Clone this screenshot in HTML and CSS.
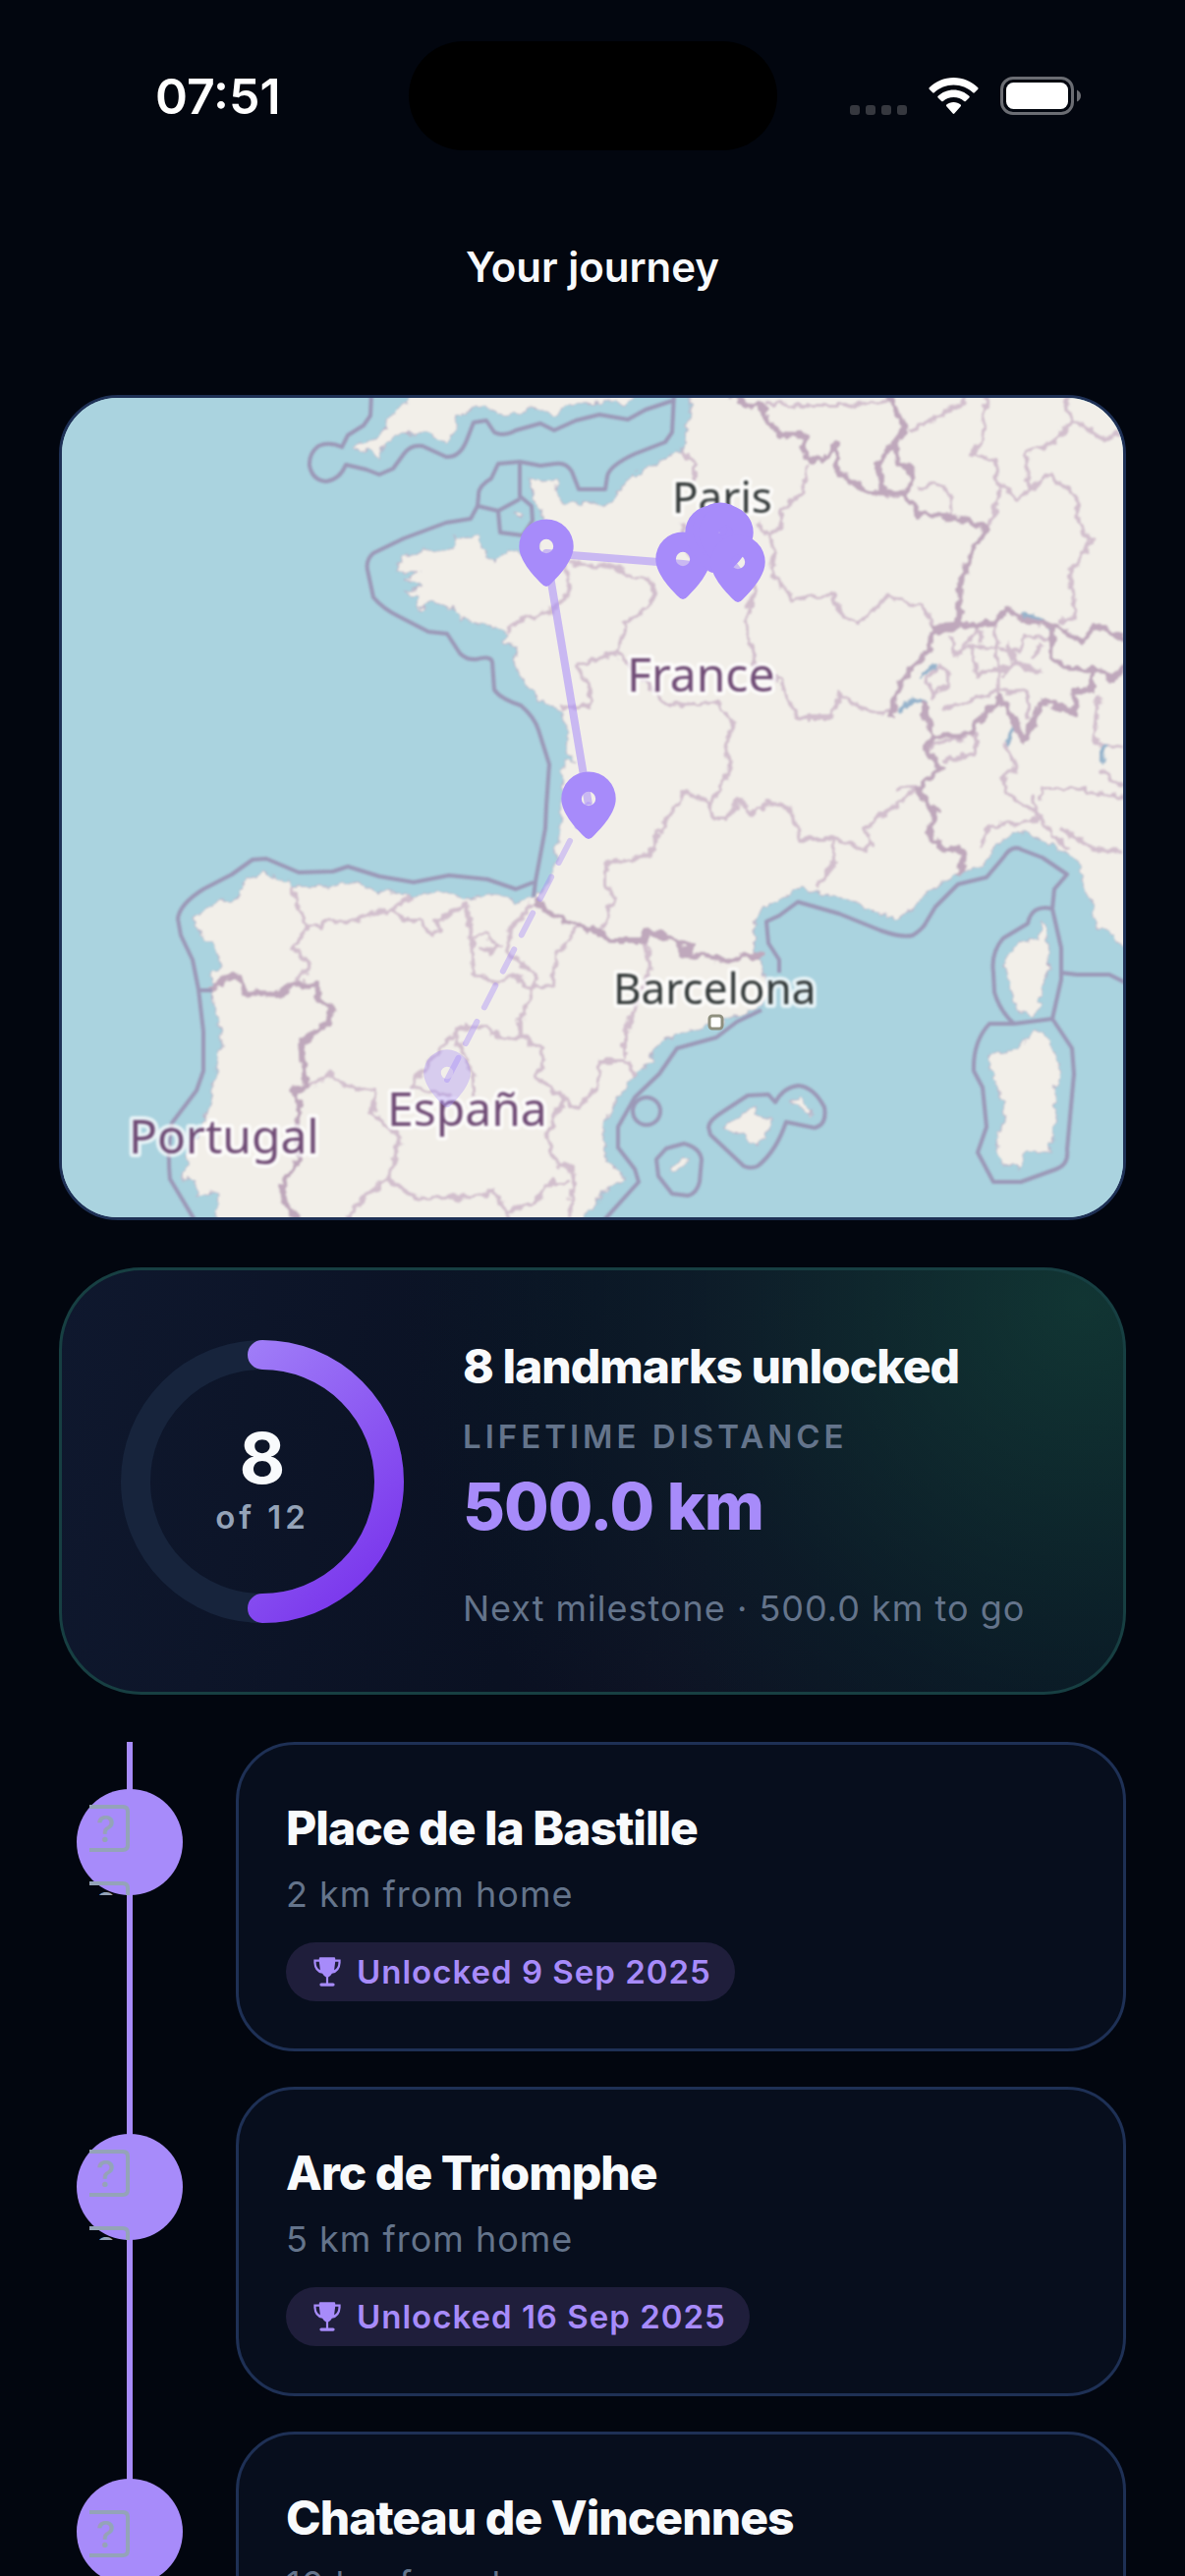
FILE: index.html
```html
<!DOCTYPE html>
<html lang="en">
<head>
    <meta charset="UTF-8">
    <meta name="viewport" content="width=device-width, initial-scale=1.0">
    <title>Your journey</title>
    <link rel="stylesheet" href="styles.css">
</head>
<body>
    <div class="status-bar">
        <span class="status-time">07:51</span>
        <div class="island"></div>
        <div class="status-icons">
            <svg class="signal" viewBox="0 0 58 38">
                <rect x="0" y="28" width="10" height="10" rx="3"/>
                <rect x="16" y="28" width="10" height="10" rx="3"/>
                <rect x="32" y="28" width="10" height="10" rx="3"/>
                <rect x="48" y="28" width="10" height="10" rx="3"/>
            </svg>
            <svg class="wifi" viewBox="0 0 51 38">
                <path d="M25.5 0C35 0 44 3.8 50.3 10.2Q51 11 50.3 11.8L46.8 15.3Q46 16 45.2 15.3C40 10.3 33 7.5 25.5 7.5S11 10.3 5.8 15.3Q5 16 4.2 15.3L.7 11.8Q0 11 .7 10.2C7 3.8 16 0 25.5 0Z"/>
                <path d="M25.5 12.5C31.6 12.5 37.2 14.9 41.4 18.8Q42.2 19.6 41.4 20.4L37.8 24Q37 24.7 36.2 24C33.3 21.4 29.6 20 25.5 20S17.7 21.4 14.8 24Q14 24.7 13.2 24L9.6 20.4Q8.8 19.6 9.6 18.8C13.8 14.9 19.4 12.5 25.5 12.5Z"/>
                <path d="M25.5 25C28.3 25 30.8 26 32.7 27.6Q33.5 28.4 32.7 29.2L26.3 36.6Q25.5 37.4 24.7 36.6L18.3 29.2Q17.5 28.4 18.3 27.6C20.2 26 22.7 25 25.5 25Z"/>
            </svg>
            <svg class="battery" viewBox="0 0 82 39">
                <rect class="battery-shell" x="1.5" y="1.5" width="72" height="36" rx="11.5"/>
                <rect class="battery-level" x="6" y="6" width="63" height="27" rx="7.5"/>
                <path class="battery-cap" d="M78 13.5Q82 15.5 82 19.5T78 25.5Z"/>
            </svg>
        </div>
    </div>

    <header class="header">
        <h1>Your journey</h1>
    </header>

    <main class="content">
        <section class="map">
            <svg class="map-canvas" viewBox="63 405 1080 834" preserveAspectRatio="xMidYMid slice">
                <defs>
                    <!-- roughens the coast and the borders -->
                    <filter id="rough" x="0" y="0" width="100%" height="100%">
                        <feTurbulence type="fractalNoise" baseFrequency="0.1" numOctaves="2" seed="4"/>
                        <feDisplacementMap in="SourceGraphic" scale="11" xChannelSelector="R" yChannelSelector="G"/>
                        <feGaussianBlur stdDeviation="1"/>
                    </filter>
                    <path id="pin" fill-rule="evenodd" d="M0 41Q-2.5 41 -5 38C-14 29 -27.7 14 -27.7 0A27.7 27.5 0 0 1 27.7 0C27.7 14 14 29 5 38Q2.5 41 0 41ZM0 -7.2A7.2 7.2 0 1 0 0 7.2A7.2 7.2 0 1 0 0 -7.2Z"/>
                </defs>
                <g filter="url(#rough)">
                    <rect class="sea" x="40" y="380" width="1130" height="890"/>
                    <!-- continent -->
                    <path class="land" d="M702 380V405L698 450L693 458L671 470L646 482L630 497L629 505L618 516L600 511L573 513L566 502L568 487L554 489L539 487L543 507L552 523L550 537L545 565L530 563L514 560L502 572L493 560L484 547L464 548L461 558L446 562L429 560L407 570L404 582L429 583L412 590L429 597L409 603L423 607L427 622L438 613L461 620L468 630L482 633L500 637L514 643L511 655L527 658L523 673L532 692L545 710L571 723L577 740L575 763L586 778L573 772L572 820L570 843L564 887L556 903L546 913L525 919L504 910L479 915L450 907L421 912L386 907L355 897L336 903L296 902L284 892L268 888L246 900L245 913L221 918L197 935L204 950L218 963L225 980L216 993L218 1023L226 1060L221 1087L216 1110L211 1133L207 1147L191 1173L187 1200L200 1203L200 1218L223 1213L219 1270H590L596 1239L603 1230L614 1213L637 1198L618 1182L612 1153L627 1120L646 1093L664 1082L662 1070L679 1057L725 1043L771 1027L782 1010L777 983L768 970L767 943L779 923L814 903L846 913L871 917L886 927L911 933L929 928L936 915L957 900L975 888L1002 880L1014 860L1032 847L1061 853L1082 868L1098 877L1105 907L1114 923L1114 943L1129 948L1143 965L1170 980V380Z"/>
                    <!-- Cornwall -->
                    <path class="land" d="M420 380L416 405L393 430L386 445L361 455L364 462L377 457L386 468L391 453L407 442L432 440L454 450L464 437L466 422L493 413L511 422L532 423L539 412L564 423L579 412L610 410L621 407L636 412L643 405V380Z"/>
                    <!-- Corsica, Sardinia, Balearics -->
                    <path class="land" d="M1061 935L1066 957L1068 987L1061 1010L1052 1038L1034 1027L1029 1007L1023 990L1025 973L1039 958L1057 955Z"/>
                    <path class="land" d="M1055 1048L1068 1060L1080 1093L1073 1107L1075 1130L1068 1175L1045 1172L1039 1188L1023 1187L1014 1173L1023 1130L1014 1100L1004 1075L1029 1070L1043 1057Z"/>
                    <path class="land" d="M734 1148L768 1127L775 1138L788 1140L779 1158L768 1165L754 1155Z"/>
                    <path class="land" d="M804 1122L814 1118L827 1130L825 1136Z"/>
                    <path class="land" d="M682 1190L695 1177L702 1180L689 1192Z"/>
                    <path class="land" d="M523 521L533 525L529 528Z"/>

                    <!-- regions of France -->
                    <path class="region" d="M693 458L707 473V490M823 473L816 503L796 517V533L784 548L789 563L784 580L807 610L846 605L857 627L873 635L904 607L939 617L954 643M771 533L784 548M575 577L580 603L564 620L530 630L514 642"/>
                    <path class="region" d="M579 572L621 577L664 592V613L636 635L629 665L586 677L600 700V720H571M629 665L679 717L732 715L746 737L738 757L743 783L723 820L727 833H739L754 813L764 830L782 817L804 823L814 853H846L882 865L888 860L880 843L921 813L934 800L914 803"/>
                    <path class="region" d="M770 597L759 627L768 677L793 693L811 730H846L854 707L882 723L907 727M723 817L696 805L689 820L670 847L661 870L616 880V900L625 913L612 947M846 855L850 877L830 905"/>
                    <path class="region" d="M693 530L700 560L740 585L770 597"/>
                    <!-- regions of Spain -->
                    <path class="region" d="M296 903L307 930L311 943H327L329 937L354 938L400 925L418 913M400 925L411 937H429L439 952L450 947L443 937L475 920L479 943L482 990L504 1000L525 992L536 1005L564 1003L566 970L589 943M543 920L521 943L514 970L546 990L543 1007M311 943L300 967L314 980L302 1002"/>
                    <path class="region" d="M543 1007L529 1040V1053L514 1058L493 1045H470L439 1077L418 1107L457 1115M464 1053L482 1097V1117M312 1107L337 1093L350 1105L382 1110L379 1133L407 1158L395 1200L368 1220L354 1239M395 1200L425 1220L482 1218L504 1212L518 1239"/>
                    <path class="region" d="M529 1053L550 1067L555 1080L545 1097L575 1117L586 1130L607 1107L611 1080H636L646 1093M636 1077V1053L646 1027L662 983L657 957M575 1117L555 1157L568 1187L584 1190L580 1239M579 1203H561L546 1223L518 1233M482 955L495 950L507 965L500 970L488 962"/>
                    <!-- Germany, Switzerland, Italy -->
                    <path class="region" d="M779 410L814 413H864L904 408M925 440L957 423L984 407M1004 400L1000 450L989 462L1011 467L1018 503L1005 537M1018 493L1036 507L1068 483L1095 505L1098 533L1111 550L1089 582L1095 630L1075 632M1046 497L1045 458L1068 453L1093 428L1084 415L1089 400M1093 428L1125 448L1143 440M932 500L950 492L966 500L968 525"/>
                    <path class="region" d="M1014 637L1016 710M989 657L1039 663L1043 647L1070 650M989 657L993 687L1036 677L1061 683M968 647L971 667L989 657M957 677L966 693L950 710L943 690ZM957 723L1016 703L1046 705V733M978 660L996 640L1000 655M1025 655L1032 675L1020 690M1050 670L1060 655"/>
                    <path class="region" d="M946 760L993 747V767L961 775M1023 757L1034 783L1021 790L1025 807L1057 830M1059 813L1061 803H1093L1143 813M1118 707L1114 757L1143 760M1121 783L1143 802M998 865L1007 842L1057 833L1086 865M1079 843L1114 865L1143 867M1050 810L1060 833"/>
                    <!-- lakes -->
                    <path class="lake" d="M914 723L929 712L943 717M1039 627L1054 628L1071 640M936 687L952 677M1118 777L1127 757M1023 757L1032 740"/>
                    <!-- countries -->
                    <path class="border" d="M746 400L757 413L775 412L779 427L795 442L818 443L821 465L836 470L852 450V478L882 502L921 503L936 523L968 527L1005 537L988 563L977 597L975 637L948 645L946 663L927 680L911 707L907 732M904 400L921 437L907 455L893 473L900 500M911 453L914 470L930 482L921 502"/>
                    <path class="border" d="M948 638L1011 635L1025 620L1039 630L1075 638L1100 653L1114 637L1143 650M1071 640L1070 670L1093 683L1114 680L1132 692L1143 680M1111 683V703H1093L1095 725L1061 713L1043 753L1018 710L986 747L952 750L941 730V715"/>
                    <path class="border" d="M952 750L941 760L957 783L934 803L952 827L945 847L957 863L982 867L975 893M545 917L564 932L610 950L621 957H655L659 947L689 957L696 972L718 973L743 978L761 972L779 973M689 957L705 962L696 972"/>
                    <path class="border" d="M216 1008L227 997L243 992L248 1010L286 1012L296 1002L323 1003L325 1020L339 1025L334 1040L307 1062L311 1107L300 1110L306 1123L302 1143L304 1183L288 1203L289 1220L305 1245"/>
                </g>

                <!-- territorial waters -->
                <g class="waters">
                    <path d="M378 400L377 423L370 433L354 443L348 455Q335 449 324 454Q314 462 315 474Q318 489 332 490Q346 488 352 473L373 478L386 483L400 477L411 462Q418 452 430 454L454 465Q468 466 475 448L482 430L495 428L503 440Q512 445 525 438L550 431L564 438L586 428L610 422L639 427L657 417L684 408"/>
                    <path d="M686 400L684 440L677 450L646 462Q620 474 618 485L616 498H589L582 480Q576 470 565 472L550 474L529 470L507 472L500 487Q486 495 487 505L486 515L479 528L454 532L411 548L380 563Q372 570 374 580L380 608Q390 620 407 628L436 643L455 645L468 665Q475 672 485 671Q500 667 501 674L503 702Q510 712 530 718Q544 730 548 743L559 778L556 820L555 843L545 897L543 913"/>
                    <path d="M529 472V505L541 515L542 530L532 545L509 542L507 520L529 508M486 515L507 520"/>
                    <path d="M543 898L525 905L496 895L457 891L421 898L386 892L354 882L339 887L304 888L271 874L257 875L236 890L207 905Q183 920 181 935L184 952L196 977L202 1007L207 1050V1090L200 1110L175 1143Q170 1170 173 1200L200 1245M202 1008H216"/>
                    <path d="M612 1245L650 1203L646 1190L629 1168V1147L646 1117L671 1093L689 1067L729 1056L750 1040L775 1028M793 990V977L782 960L780 938L793 932L812 918L854 930L896 947Q918 955 929 952Q940 945 943 938L952 923L975 900L1004 893L1021 873Q1030 859 1040 865L1061 873L1086 890L1073 905L1071 925Q1050 920 1046 940L1021 955Q1008 970 1011 990L1012 1010Q1018 1030 1032 1042H1007Q990 1060 991 1090L1000 1107L1004 1147L995 1173L1011 1203H1039L1075 1190Q1088 1185 1086 1170L1093 1093L1091 1067L1071 1037L1080 997V965L1071 925M1080 990L1096 992H1129L1145 1000M1032 1042L1071 1037"/>
                    <path d="M721 1147Q722 1140 735 1132L761 1115L782 1114L789 1122Q797 1107 812 1105Q828 1106 839 1127Q842 1145 829 1148L800 1142Q790 1172 771 1187Q764 1190 757 1187L723 1155Z"/>
                    <path d="M668 1180L678 1169L696 1164Q712 1168 714 1180L712 1203Q709 1215 700 1217L684 1215L670 1197Z"/>
                    <circle cx="658" cy="1131" r="14"/>
                </g>

                <rect class="town" x="722" y="1034" width="13" height="13" rx="3"/>
                <text class="label city" x="684" y="522">Paris</text>
                <text class="label city" x="624" y="1022">Barcelona</text>
                <text class="label country" x="638" y="704">France</text>
                <text class="label country" x="394" y="1146">España</text>
                <text class="label country" x="131" y="1174">Portugal</text>

                <path class="route" d="M739 550L725 548L751 581L695 574L556 563L599 819"/>
                <path class="route-next" d="M455 1099L599 819"/>
                <use class="pin" href="#pin" x="556" y="556"/>
                <use class="pin" href="#pin" x="599" y="813"/>
                <use class="pin" href="#pin" x="695" y="569"/>
                <use class="pin" href="#pin" x="725" y="542"/>
                <use class="pin" href="#pin" x="733" y="539"/>
                <use class="pin" href="#pin" x="739" y="542"/>
                <use class="pin" href="#pin" x="751" y="572"/>
                <use class="pin pin-locked" href="#pin" transform="translate(455 1092) scale(.86)"/>
            </svg>
        </section>

        <section class="summary">
            <div class="ring">
                <svg class="ring-chart" viewBox="0 0 288 288">
                    <defs>
                        <linearGradient id="ringFill" gradientUnits="userSpaceOnUse" x1="40" y1="20" x2="248" y2="240">
                            <stop offset="0" stop-color="#a78bfa"/>
                            <stop offset="1" stop-color="#7c3aed"/>
                        </linearGradient>
                    </defs>
                    <circle class="ring-track" cx="144" cy="144" r="129"/>
                    <path class="ring-value" d="M144 15A129 129 0 0 1 144 273"/>
                </svg>
                <div class="ring-text">
                    <span class="ring-count">8</span>
                    <span class="ring-total">of 12</span>
                </div>
            </div>
            <div class="summary-text">
                <h2 class="title">8 landmarks unlocked</h2>
                <p class="summary-label">LIFETIME DISTANCE</p>
                <p class="summary-value">500.0 km</p>
                <p class="note">Next milestone · 500.0 km to go</p>
            </div>
        </section>

        <ol class="timeline">
            <li class="stop">
                <div class="rail">
                    <div class="dot">
                        <svg class="dot-icon" viewBox="0 0 41 92">
                            <path d="M0 2H34Q39 2 39 7V41Q39 46 34 46H0M0 80H34Q39 80 39 85V100"/>
                            <text x="17" y="38">?</text>
                            <text x="17" y="116">?</text>
                        </svg>
                    </div>
                </div>
                <article class="card">
                    <h2 class="title">Place de la Bastille</h2>
                    <p class="note">2 km from home</p>
                    <span class="badge">
                        <svg class="trophy" viewBox="0 0 33 33"><path d="M9 4Q9 3 10 3H23Q24 3 24 4V5H29V8Q28.5 17 21 18Q19.5 20.5 17.5 21.5V27H22Q23.5 27 23.5 28.5T22 30H11Q9.5 30 9.5 28.5T11 27H15.5V21.5Q13.5 20.5 12 18Q4.5 17 4 8V5H9ZM9 7H6Q6 13 10 15ZM24 7L23 15Q27 13 27 7Z"/></svg>
                        Unlocked 9 Sep 2025
                    </span>
                </article>
            </li>
            <li class="stop">
                <div class="rail">
                    <div class="dot">
                        <svg class="dot-icon" viewBox="0 0 41 92">
                            <path d="M0 2H34Q39 2 39 7V41Q39 46 34 46H0M0 80H34Q39 80 39 85V100"/>
                            <text x="17" y="38">?</text>
                            <text x="17" y="116">?</text>
                        </svg>
                    </div>
                </div>
                <article class="card">
                    <h2 class="title">Arc de Triomphe</h2>
                    <p class="note">5 km from home</p>
                    <span class="badge">
                        <svg class="trophy" viewBox="0 0 33 33"><path d="M9 4Q9 3 10 3H23Q24 3 24 4V5H29V8Q28.5 17 21 18Q19.5 20.5 17.5 21.5V27H22Q23.5 27 23.5 28.5T22 30H11Q9.5 30 9.5 28.5T11 27H15.5V21.5Q13.5 20.5 12 18Q4.5 17 4 8V5H9ZM9 7H6Q6 13 10 15ZM24 7L23 15Q27 13 27 7Z"/></svg>
                        Unlocked 16 Sep 2025
                    </span>
                </article>
            </li>
            <li class="stop">
                <div class="rail">
                    <div class="dot">
                        <svg class="dot-icon" viewBox="0 -16 41 92">
                            <path d="M0 2H34Q39 2 39 7V41Q39 46 34 46H0"/>
                            <text x="17" y="38">?</text>
                        </svg>
                    </div>
                </div>
                <article class="card">
                    <h2 class="title">Chateau de Vincennes</h2>
                    <p class="note">10 km from home</p>
                </article>
            </li>
        </ol>
    </main>
</body>
</html>
```
FILE: styles.css
```css
* {
    margin: 0;
    padding: 0;
    box-sizing: border-box;
}

body {
    height: 100vh;
    overflow: hidden;
    background: #02060f;
    color: #f8fafc;
    font-family: Inter, "Liberation Sans", sans-serif;
}

/* Status bar */
.status-bar {
    display: grid;
    grid-template-columns: 1fr 375px 1fr;
    align-items: center;
    padding-top: 42px;
}

.status-time {
    justify-self: center;
    padding-left: 28px;
    font-size: 50px;
    font-weight: 600;
    line-height: 60px;
    color: #fff;
}

.island {
    height: 111px;
    border-radius: 56px;
    background: #000;
}

.status-icons {
    display: flex;
    justify-content: flex-end;
    align-items: center;
    gap: 22px;
    padding-right: 106px;
}

.signal {
    width: 58px;
    height: 38px;
    fill: #36383f;
}

.wifi {
    width: 51px;
    height: 38px;
    fill: #fff;
}

.battery {
    width: 82px;
    height: 39px;
}

.battery-shell {
    fill: none;
    stroke: #6b6d73;
    stroke-width: 3;
}

.battery-level {
    fill: #fff;
}

.battery-cap {
    fill: #6b6d73;
}

/* Header */
.header {
    display: flex;
    justify-content: center;
    align-items: center;
    height: 237px;
}

.header h1 {
    font-size: 42px;
    font-weight: 600;
    line-height: 54px;
}

.content {
    display: flex;
    flex-direction: column;
    gap: 48px;
    padding: 12px 60px 0;
}

/* Map */
.map {
    height: 840px;
    border: 3px solid #1e3055;
    border-radius: 60px;
    overflow: hidden;
    background: #aad3df;
}

.map-canvas {
    display: block;
    width: 100%;
    height: 100%;
}

.sea {
    fill: #aad3df;
}

.land {
    fill: #f2efe9;
    stroke: #b9aec4;
    stroke-width: 1;
}

.region,
.border,
.lake,
.waters {
    fill: none;
    stroke-linejoin: round;
}

.region {
    stroke: #d2bfcd;
    stroke-width: 4;
}

.border {
    stroke: #bfa8bc;
    stroke-width: 6;
}

.lake {
    stroke: #96b4cc;
    stroke-width: 5;
}

.waters {
    stroke: #9b98b7;
    stroke-width: 4;
    filter: blur(1px);
}

.town {
    fill: #fff;
    stroke: #8f907f;
    stroke-width: 3;
}

.label {
    font-family: "Noto Sans", sans-serif;
    paint-order: stroke;
    stroke: rgba(255, 255, 255, 0.7);
    stroke-width: 8px;
    stroke-linejoin: round;
    filter: blur(1px);
}

.city {
    font-size: 44px;
    fill: #333939;
}

.country {
    font-size: 48px;
    fill: #704c76;
}

.route {
    fill: none;
    stroke: #a78bfa;
    stroke-width: 8;
    stroke-linejoin: round;
    opacity: 0.55;
}

.route-next {
    stroke: #a78bfa;
    stroke-width: 6;
    stroke-linecap: round;
    stroke-dasharray: 25 16.4;
    opacity: 0.4;
}

.pin {
    fill: #a78bfa;
}

.pin-locked {
    opacity: 0.35;
}

/* Summary card */
.summary {
    display: flex;
    align-items: center;
    gap: 60px;
    height: 435px;
    padding: 0 60px;
    border: 3px solid #173f42;
    border-radius: 84px;
    background:
        radial-gradient(circle at 96% 8%, rgba(20, 66, 58, 0.75), rgba(12, 38, 46, 0.5) 36%, rgba(10, 20, 36, 0) 62%),
        linear-gradient(100deg, #0f182e, #0a1122 45%, #0e0f22 60%, #08101e);
    background-origin: border-box;
}

.ring {
    display: grid;
    place-items: center;
    flex: none;
}

.ring-chart,
.ring-text {
    grid-area: 1 / 1;
}

.ring-chart {
    width: 288px;
    height: 288px;
    fill: none;
    stroke-width: 30;
}

.ring-track {
    stroke: #17243c;
}

.ring-value {
    stroke: url(#ringFill);
    stroke-linecap: round;
}

.ring-text {
    display: flex;
    flex-direction: column;
    align-items: center;
    gap: 3px;
    padding-bottom: 3px;
}

.ring-count {
    font-size: 72px;
    font-weight: 700;
    line-height: 72px;
}

.ring-total {
    font-size: 33px;
    font-weight: 600;
    line-height: 42px;
    letter-spacing: 4px;
    color: #94a3b8;
}

.summary-text {
    margin-top: 6px;
}

.title {
    font-size: 48px;
    font-weight: 800;
    line-height: 60px;
    letter-spacing: -1px;
}

.summary-label {
    margin-top: 20px;
    font-size: 33px;
    font-weight: 600;
    line-height: 42px;
    letter-spacing: 4px;
    color: #64748b;
}

.summary-value {
    margin-top: 8px;
    font-size: 66px;
    font-weight: 800;
    line-height: 84px;
    letter-spacing: -1px;
    color: #a78bfa;
}

.note {
    font-size: 36px;
    line-height: 48px;
    letter-spacing: 1px;
    color: #64748b;
}

.summary .note {
    margin-top: 38px;
}

/* Timeline */
.timeline {
    list-style: none;
}

.stop {
    display: flex;
    gap: 36px;
}

.rail {
    flex: none;
    width: 144px;
    padding: 48px 18px 0;
    background: linear-gradient(#a78bfa, #a78bfa) center / 6px 100% no-repeat;
}

.dot {
    height: 108px;
    padding: 16px 0 0 13px;
    border-radius: 50%;
    background: #a78bfa;
}

.dot-icon {
    display: block;
    width: 41px;
    height: 92px;
    fill: none;
    stroke: #94a3b8;
    stroke-width: 4;
}

.dot-icon text {
    font-size: 37px;
    font-weight: 500;
    text-anchor: middle;
    fill: #94a3b8;
    stroke: none;
}

.card {
    flex: 1;
    margin-bottom: 36px;
    padding: 48px;
    border: 3px solid #1e3055;
    border-radius: 60px;
    background: #070e1d;
}

.card .title {
    line-height: 74px;
}

.card .note {
    margin: 6px 0 25px;
}

.badge {
    display: inline-flex;
    align-items: center;
    gap: 12px;
    height: 60px;
    padding: 0 24px;
    border-radius: 30px;
    background: #1f1e3b;
    color: #a78bfa;
    font-size: 33px;
    font-weight: 600;
    line-height: 42px;
    letter-spacing: 1px;
    vertical-align: top;
}

.trophy {
    width: 36px;
    height: 36px;
    fill: currentColor;
    fill-rule: evenodd;
}
```
